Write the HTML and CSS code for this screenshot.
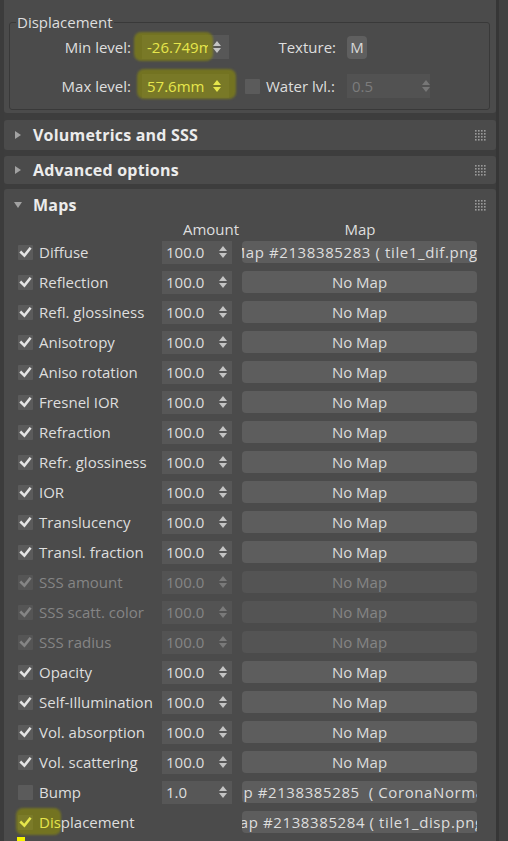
FILE: index.html
```html
<!DOCTYPE html>
<html>
<head>
<meta charset="utf-8">
<link rel="stylesheet" href="styles.css">
</head>
<body>
<div class="screen">
  <div class="edge-l"></div>
  <div class="col">
    <section class="panel p-disp">
      <fieldset class="group">
        <legend>Displacement</legend>
        <div class="grow r1">
          <span class="lbl-a">Min level:</span>
          <div class="vfield hy-field">
            <span class="val hy">-26.749mm</span>
            <svg class="arr" viewBox="0 0 8 12"><path d="M0 5 L4 0 L8 5Z M0 7 L8 7 L4 12Z"/></svg>
          </div>
          <span class="lbl-t">Texture:</span>
          <span class="mbtn">M</span>
        </div>
        <div class="grow r2">
          <span class="lbl-a">Max level:</span>
          <div class="vfield">
            <span class="val hy">57.6mm</span>
            <svg class="arr hy" viewBox="0 0 8 12"><path d="M0 5 L4 0 L8 5Z M0 7 L8 7 L4 12Z"/></svg>
          </div>
          <span class="cb cb-water"></span>
          <span class="lbl-w">Water lvl.:</span>
          <div class="vfield wfield dis">
            <span class="val">0.5</span>
            <svg class="arr" viewBox="0 0 8 12"><path d="M0 5 L4 0 L8 5Z M0 7 L8 7 L4 12Z"/></svg>
          </div>
        </div>
      </fieldset>
    </section>

    <section class="panel roll r-vol">
      <svg class="tri" viewBox="0 0 6 8"><path d="M0 0 L6 4 L0 8Z"/></svg>
      <span class="rtitle">Volumetrics and SSS</span>
      <svg class="grip" viewBox="0 0 11 11"><g><rect x="0" y="0" width="1.6" height="1.6"/><rect x="3" y="0" width="1.6" height="1.6"/><rect x="6" y="0" width="1.6" height="1.6"/><rect x="9" y="0" width="1.6" height="1.6"/><rect x="0" y="3" width="1.6" height="1.6"/><rect x="3" y="3" width="1.6" height="1.6"/><rect x="6" y="3" width="1.6" height="1.6"/><rect x="9" y="3" width="1.6" height="1.6"/><rect x="0" y="6" width="1.6" height="1.6"/><rect x="3" y="6" width="1.6" height="1.6"/><rect x="6" y="6" width="1.6" height="1.6"/><rect x="9" y="6" width="1.6" height="1.6"/><rect x="0" y="9" width="1.6" height="1.6"/><rect x="3" y="9" width="1.6" height="1.6"/><rect x="6" y="9" width="1.6" height="1.6"/><rect x="9" y="9" width="1.6" height="1.6"/></g></svg>
    </section>

    <section class="panel roll r-adv">
      <svg class="tri" viewBox="0 0 6 8"><path d="M0 0 L6 4 L0 8Z"/></svg>
      <span class="rtitle">Advanced options</span>
      <svg class="grip" viewBox="0 0 11 11"><g><rect x="0" y="0" width="1.6" height="1.6"/><rect x="3" y="0" width="1.6" height="1.6"/><rect x="6" y="0" width="1.6" height="1.6"/><rect x="9" y="0" width="1.6" height="1.6"/><rect x="0" y="3" width="1.6" height="1.6"/><rect x="3" y="3" width="1.6" height="1.6"/><rect x="6" y="3" width="1.6" height="1.6"/><rect x="9" y="3" width="1.6" height="1.6"/><rect x="0" y="6" width="1.6" height="1.6"/><rect x="3" y="6" width="1.6" height="1.6"/><rect x="6" y="6" width="1.6" height="1.6"/><rect x="9" y="6" width="1.6" height="1.6"/><rect x="0" y="9" width="1.6" height="1.6"/><rect x="3" y="9" width="1.6" height="1.6"/><rect x="6" y="9" width="1.6" height="1.6"/><rect x="9" y="9" width="1.6" height="1.6"/></g></svg>
    </section>

    <section class="panel p-maps">
      <div class="roll r-maps">
        <svg class="tri tri-down" viewBox="0 0 8 6"><path d="M0 0 L8 0 L4 6Z"/></svg>
        <span class="rtitle">Maps</span>
        <svg class="grip" viewBox="0 0 11 11"><g><rect x="0" y="0" width="1.6" height="1.6"/><rect x="3" y="0" width="1.6" height="1.6"/><rect x="6" y="0" width="1.6" height="1.6"/><rect x="9" y="0" width="1.6" height="1.6"/><rect x="0" y="3" width="1.6" height="1.6"/><rect x="3" y="3" width="1.6" height="1.6"/><rect x="6" y="3" width="1.6" height="1.6"/><rect x="9" y="3" width="1.6" height="1.6"/><rect x="0" y="6" width="1.6" height="1.6"/><rect x="3" y="6" width="1.6" height="1.6"/><rect x="6" y="6" width="1.6" height="1.6"/><rect x="9" y="6" width="1.6" height="1.6"/><rect x="0" y="9" width="1.6" height="1.6"/><rect x="3" y="9" width="1.6" height="1.6"/><rect x="6" y="9" width="1.6" height="1.6"/><rect x="9" y="9" width="1.6" height="1.6"/></g></svg>
      </div>
      <div class="mhead">
        <span class="h-amt">Amount</span>
        <span class="h-map">Map</span>
      </div>
      <div class="mrows" id="rows"></div>
    </section>
  </div>
  <div class="edge-r"></div>

  <div class="hl hl-min"></div>
  <div class="hl hl-max"></div>
  <div class="hl hl-disp"></div>
  <div class="hl-mark"></div>
</div>
<script src="app.js"></script>
</body>
</html>
```

FILE: app.js
```javascript
const rows = [
  ["Diffuse", "100.0", "Map #2138385283 ( tile1_dif.png )", 1, 0],
  ["Reflection", "100.0", "No Map", 1, 0],
  ["Refl. glossiness", "100.0", "No Map", 1, 0],
  ["Anisotropy", "100.0", "No Map", 1, 0],
  ["Aniso rotation", "100.0", "No Map", 1, 0],
  ["Fresnel IOR", "100.0", "No Map", 1, 0],
  ["Refraction", "100.0", "No Map", 1, 0],
  ["Refr. glossiness", "100.0", "No Map", 1, 0],
  ["IOR", "100.0", "No Map", 1, 0],
  ["Translucency", "100.0", "No Map", 1, 0],
  ["Transl. fraction", "100.0", "No Map", 1, 0],
  ["SSS amount", "100.0", "No Map", 1, 1],
  ["SSS scatt. color", "100.0", "No Map", 1, 1],
  ["SSS radius", "100.0", "No Map", 1, 1],
  ["Opacity", "100.0", "No Map", 1, 0],
  ["Self-Illumination", "100.0", "No Map", 1, 0],
  ["Vol. absorption", "100.0", "No Map", 1, 0],
  ["Vol. scattering", "100.0", "No Map", 1, 0],
  ["Bump", "1.0", "Map #2138385285  ( CoronaNormal )", 0, 0],
  ["Displacement", null, "Map #2138385284 ( tile1_disp.png )", 1, 0]
];
const check = '<svg class="chk" viewBox="0 0 15 15"><path d="M3.2 7.4 L6.4 10.6 L11.8 3.8"/></svg>';
const arr = '<svg class="arr" viewBox="0 0 8 12"><path d="M0 5 L4 0 L8 5Z M0 7 L8 7 L4 12Z"/></svg>';
const host = document.getElementById("rows");
let html = "";
for (const [label, amt, map, on, dis] of rows) {
  const isDisp = label === "Displacement";
  const lbl = isDisp ? '<span class="hy">Dis</span>placement' : label;
  const long = map !== "No Map" ? " long" : "";
  html += '<div class="mrow' + (dis ? ' dis' : '') + (isDisp ? ' disp' : '') + '">' +
    '<span class="cb">' + (on ? check : '') + '</span>' +
    '<span class="mlbl">' + lbl + '</span>' +
    (amt ? '<span class="amt"><span class="val">' + amt + '</span>' + arr + '</span>' : '<span class="amt empty"></span>') +
    '<span class="mapb"><span class="mtxt' + long + '">' + map + '</span></span>' +
    '</div>';
}
host.innerHTML = html;
```

FILE: styles.css
```css
* { box-sizing: border-box; }
html, body { margin: 0; padding: 0; }
body {
  width: 508px;
  height: 841px;
  overflow: hidden;
  background: #3d3d3d;
  font-family: "Open Sans", "Noto Sans", sans-serif;
  font-size: 15px;
  color: #dedede;
}
.screen { position: relative; display: flex; height: 841px; }
.edge-l { width: 4px; background: #3c3c3c; }
.edge-r { width: 12px; background: #414141; border-left: 3px solid #363636; }
.col { width: 492px; display: flex; flex-direction: column; }

.panel { background: #4b4b4b; border-radius: 3px; }

/* Displacement group */
.p-disp { height: 113px; padding: 0 6px 0 5px; border-radius: 0 0 3px 3px; display: flow-root; }
.group {
  margin: 12px 0 0;
  padding: 0 0 10px;
  border: 1px solid #393939;
  border-radius: 3px;
  min-width: 0;
}
.group legend { margin-left: 6px; padding: 0 1px; line-height: 20px; }
.grow { display: flex; align-items: center; height: 26px; }
.grow.r1 { margin-top: 2px; }
.grow.r2 { margin-top: 13px; }
.lbl-a { width: 121px; text-align: right; margin-right: 11px; white-space: nowrap; }
.vfield {
  width: 87px; height: 24px; background: #575757;
  display: flex; align-items: center; padding-left: 5px;
}
.vfield .val { width: 61px; overflow: hidden; white-space: nowrap; position: relative; z-index: 2; }
.vfield .arr { margin-left: 5px; }
.lbl-t { width: 107px; text-align: right; margin-right: 11px; }
.mbtn {
  width: 20px; height: 23px; background: #5f5f5f; border-radius: 4px;
  display: flex; align-items: center; justify-content: center; font-size: 15px; color: #d8d8d8;
}
.cb-water { margin-left: 16px; }
.lbl-w { width: 81px; margin-left: 6px; white-space: nowrap; }
.wfield { width: 83px; background: #525252; }
.wfield .val { width: 66px; }
.dis .val, .wfield .val { color: #7c7c7c; }
.wfield .arr { color: #777; margin-left: 6px; }

.arr { width: 8px; height: 12px; fill: currentColor; color: #c4c4c4; flex: none; position: relative; z-index: 2; }

/* Rollout headers */
.roll { display: flex; align-items: center; padding: 0 10px 0 11px; }
.r-vol { margin-top: 7px; height: 30px; }
.r-adv { margin-top: 6px; height: 28px; }
.tri { width: 6px; height: 8px; fill: #a2a2a2; margin-right: 12px; flex: none; }
.tri-down { width: 8px; height: 6px; margin-left: -1px; margin-right: 11px; }
.rtitle { font-weight: 700; font-size: 16px; letter-spacing: 0.2px; color: #ececec; flex: 1; }
.grip { width: 11px; height: 11px; fill: #9a9a9a; flex: none; }

/* Maps */
.p-maps { margin-top: 5px; flex: 1; border-radius: 3px 3px 0 0; }
.r-maps { height: 32px; }
.mhead { display: flex; height: 16px; line-height: 16px; padding-left: 162px; }
.h-amt { width: 80px; display: flex; justify-content: center; padding-left: 10px; padding-right: 0; }
.h-map { width: 235px; display: flex; justify-content: center; padding-right: 7px; }

.mrow { display: flex; align-items: center; height: 30px; padding-left: 14px; }
.cb {
  width: 15px; height: 15px; background: #5b5b5b; border-radius: 1px; flex: none;
  display: flex; align-items: center; justify-content: center;
}
.chk { width: 15px; height: 15px; fill: none; stroke: #e4e4e4; stroke-width: 2.6; stroke-linecap: square; position: relative; z-index: 2; }
.mlbl { width: 123px; margin-left: 6px; white-space: nowrap; position: relative; z-index: 2; }
.amt {
  width: 70px; height: 23px; background: #575757; flex: none;
  display: flex; align-items: center; justify-content: space-between; padding: 0 5px 0 4px;
}
.amt.empty { background: transparent; }
.mapb {
  width: 235px; height: 22px; margin-left: 10px; background: #5d5d5d; border-radius: 4px; flex: none;
  display: flex; align-items: center; justify-content: center; overflow: hidden;
}
.mtxt { white-space: pre; flex: none; }
.mtxt.long { letter-spacing: 0.6px; }

.mrow.dis .cb { background: #555; }
.mrow.dis .chk { stroke: #858585; }
.mrow.dis .mlbl, .mrow.dis .val, .mrow.dis .mtxt { color: #858585; }
.mrow.dis .arr { color: #7a7a7a; }
.mrow.dis .amt { background: #535353; }
.mrow.dis .mapb { background: #545454; }

/* highlighter marks */
.hy { color: #e6e64c !important; position: relative; z-index: 2; }
.mrow.disp .chk { stroke: #e6e64c; }
.hl { position: absolute; z-index: 1; background: rgba(150, 150, 0, 0.55); border-radius: 7px; filter: blur(1px); }
.hl-min { left: 134px; top: 32px; width: 79px; height: 29px; }
.hl-max { left: 137px; top: 69px; width: 99px; height: 30px; }
.hl-disp { left: 16px; top: 808px; width: 45px; height: 27px; }
.hl-mark { position: absolute; left: 17px; top: 837px; width: 8px; height: 4px; background: #f4f400; }
```
